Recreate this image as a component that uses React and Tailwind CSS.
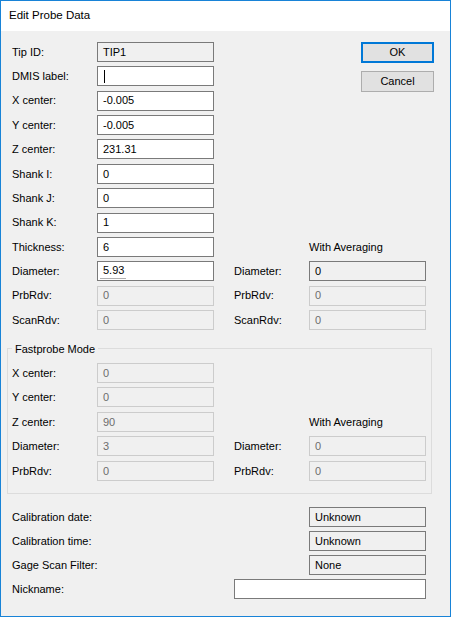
import React from 'react'

const font = { fontFamily: '"Liberation Sans", Arial, sans-serif' }

const Box = ({ value, kind = 'edit', children }) => {
  const base = 'h-5 flex items-center pl-[5px] text-[11px] border '
  const styles = {
    edit: 'bg-white border-[#7a7a7a] text-black',
    readonly: 'bg-[#f0f0f0] border-[#7a7a7a] text-black',
    disabled: 'bg-[#f0f0f0] border-[#cccccc] text-[#6d6d6d]',
  }
  return (
    <div className={base + styles[kind]}>
      {value}
      {children}
    </div>
  )
}

const Label = ({ text, right }) => (
  <div className={(right ? 'col-start-4' : 'col-start-1') + ' h-5 flex items-center text-[11px] text-black whitespace-nowrap'}>
    {text}
  </div>
)

const Averaging = () => (
  <div className="col-start-5 h-5 flex items-center text-[11px] text-black whitespace-nowrap">With Averaging</div>
)

export default function App() {
  return (
    <div className="w-[451px] h-[617px] border border-[#1883d7] bg-[#f0f0f0] flex flex-col" style={font}>
      <div className="h-[30px] bg-white flex items-center pl-[8px] text-[11.5px] text-black shrink-0">Edit Probe Data</div>

      <div className="pl-[11px] pt-[11px] flex flex-col">
        <div className="grid grid-cols-[85px_117px_20px_75px_117px] auto-rows-[20px] gap-y-[4.36px]">
          <div className="col-start-5 row-start-1 row-span-3 ml-[52px] w-[73px] flex flex-col gap-[8px]">
            <button className="h-[21px] w-[73px] bg-[#e1e1e1] border-2 border-[#0078d7] text-[11px] text-black flex items-center justify-center">OK</button>
            <button className="h-[21px] w-[73px] bg-[#e1e1e1] border border-[#adadad] text-[11px] text-black flex items-center justify-center">Cancel</button>
          </div>

          <Label text="Tip ID:" />
          <Box kind="readonly" value="TIP1" />
          <Label text="DMIS label:" />
          <Box>
            <span className="w-px h-[13px] bg-black ml-[1px]" />
          </Box>
          <Label text="X center:" />
          <Box value="-0.005" />
          <Label text="Y center:" />
          <Box value="-0.005" />
          <Label text="Z center:" />
          <Box value="231.31" />
          <Label text="Shank I:" />
          <Box value="0" />
          <Label text="Shank J:" />
          <Box value="0" />
          <Label text="Shank K:" />
          <Box value="1" />
          <Label text="Thickness:" />
          <Box value="6" />
          <Averaging />
          <Label text="Diameter:" />
          <Box>
            <span className="border-b border-[#b0b0b0] pr-[2px] -ml-[3px] pl-[3px] leading-[15px]">5.93</span>
          </Box>
          <Label text="Diameter:" right />
          <Box kind="readonly" value="0" />
          <Label text="PrbRdv:" />
          <Box kind="disabled" value="0" />
          <Label text="PrbRdv:" right />
          <Box kind="disabled" value="0" />
          <Label text="ScanRdv:" />
          <Box kind="disabled" value="0" />
          <Label text="ScanRdv:" right />
          <Box kind="disabled" value="0" />
        </div>

        <fieldset className="mt-[11px] -ml-[5px] w-[425px] border border-[#dcdcdc] pl-[4px] pb-[12px]">
          <legend className="px-[3px] text-[11px] leading-[16px] text-black">Fastprobe Mode</legend>
          <div className="mt-[6px] grid grid-cols-[85px_117px_20px_75px_117px] auto-rows-[20px] gap-y-[4.5px]">
            <Label text="X center:" />
            <Box kind="disabled" value="0" />
            <Label text="Y center:" />
            <Box kind="disabled" value="0" />
            <Label text="Z center:" />
            <Box kind="disabled" value="90" />
            <Averaging />
            <Label text="Diameter:" />
            <Box kind="disabled" value="3" />
            <Label text="Diameter:" right />
            <Box kind="disabled" value="0" />
            <Label text="PrbRdv:" />
            <Box kind="disabled" value="0" />
            <Label text="PrbRdv:" right />
            <Box kind="disabled" value="0" />
          </div>
        </fieldset>

        <div className="mt-[13px] grid grid-cols-[85px_117px_20px_75px_117px] auto-rows-[20px] gap-y-[4px]">
          <div className="col-start-1 col-span-4 h-5 flex items-center text-[11px]">Calibration date:</div>
          <Box kind="readonly" value="Unknown" />
          <div className="col-start-1 col-span-4 h-5 flex items-center text-[11px]">Calibration time:</div>
          <Box kind="readonly" value="Unknown" />
          <div className="col-start-1 col-span-4 h-5 flex items-center text-[11px]">Gage Scan Filter:</div>
          <Box kind="readonly" value="None" />
          <div className="col-start-1 col-span-3 h-5 flex items-center text-[11px]">Nickname:</div>
          <div className="col-start-4 col-span-2 h-5 bg-white border border-[#7a7a7a]" />
        </div>
      </div>
    </div>
  )
}
